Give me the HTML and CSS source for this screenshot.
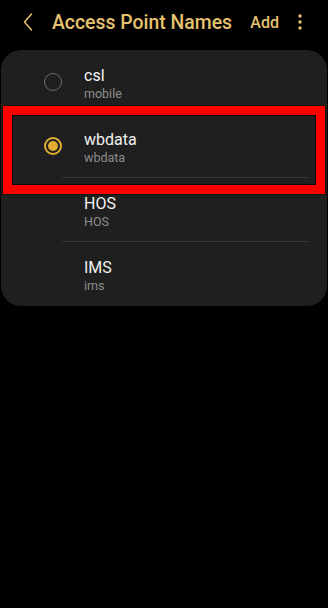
FILE: index.html
```html
<!DOCTYPE html>
<html lang="en">
<head>
    <meta charset="UTF-8">
    <meta name="viewport" content="width=device-width, initial-scale=1.0">
    <title>Access Point Names</title>
    <link rel="stylesheet" href="styles.css">
</head>
<body>

<div class="header">
    <div class="back">
        <svg width="10" height="18" viewBox="0 0 10 18">
            <polyline points="8.5,1 1.5,9 8.5,17" fill="none" stroke="#e6c26e" stroke-width="1.5" stroke-linecap="round" stroke-linejoin="round"/>
        </svg>
    </div>
    <h1 class="title">Access Point Names</h1>
    <div class="add">Add</div>
    <div class="more">
        <svg width="4" height="16" viewBox="0 0 4 16">
            <circle cx="2" cy="2" r="1.7" fill="#e6c26e"/>
            <circle cx="2" cy="8" r="1.7" fill="#e6c26e"/>
            <circle cx="2" cy="14" r="1.7" fill="#e6c26e"/>
        </svg>
    </div>
</div>

<div class="card">
    <div class="apn-row">
        <div class="radio"></div>
        <div class="apn-text">
            <div class="apn-name">csl</div>
            <div class="apn-sub">mobile</div>
        </div>
    </div>
    <div class="apn-row">
        <div class="radio checked"></div>
        <div class="apn-text">
            <div class="apn-name">wbdata</div>
            <div class="apn-sub">wbdata</div>
        </div>
    </div>
    <div class="apn-row">
        <div class="radio-space"></div>
        <div class="apn-text">
            <div class="apn-name">HOS</div>
            <div class="apn-sub">HOS</div>
        </div>
    </div>
    <div class="apn-row last">
        <div class="radio-space"></div>
        <div class="apn-text">
            <div class="apn-name">IMS</div>
            <div class="apn-sub">ims</div>
        </div>
    </div>

    <!-- highlight box drawn over the selected row -->
    <div class="highlight"></div>
</div>

</body>
</html>
```

FILE: styles.css
```css
body {
    font-family: Roboto, "Noto Sans", sans-serif;
    background-color: #000;
    margin: 0;
    padding: 0;
    width: 328px;
    height: 608px;
    overflow: hidden;
}

.header {
    display: flex;
    align-items: center;
    height: 44px;
    padding-left: 23px;
}

.back {
    display: flex;
    width: 10px;
}

.title {
    flex: 1;
    margin: 0 0 0 19px;
    font-size: 19.4px;
    font-weight: 500;
    color: #e6c26e;
}

.add {
    font-size: 16px;
    font-weight: 500;
    color: #e6c26e;
    margin-right: 19px;
}

.more {
    display: flex;
    margin-right: 26px;
}

.card {
    position: relative;
    margin: 6px 1px 0 1px;
    background-color: #1f1f1f;
    border-radius: 20px;
    overflow: hidden;
}

.apn-row {
    display: flex;
    align-items: center;
    height: 64px;
    position: relative;
}

.apn-row::after {
    content: "";
    position: absolute;
    left: 61px;
    right: 18px;
    bottom: 0;
    height: 1px;
    background-color: #353535;
}

.apn-row.last::after {
    display: none;
}

.radio,
.radio-space {
    width: 18px;
    height: 18px;
    margin-left: 43px;
    margin-right: 22px;
    box-sizing: border-box;
    flex-shrink: 0;
}

.radio {
    border: 1.5px solid #6e6e6e;
    border-radius: 50%;
}

.radio.checked {
    border: 2px solid #e2ad32;
    position: relative;
}

.radio.checked::after {
    content: "";
    position: absolute;
    left: 2px;
    top: 2px;
    width: 10px;
    height: 10px;
    border-radius: 50%;
    background-color: #e2ad32;
}

.apn-text {
    padding-top: 4px;
}

.apn-name {
    font-size: 16px;
    line-height: 20px;
    color: #f2f2f2;
}

.apn-sub {
    font-size: 12.5px;
    line-height: 16px;
    color: #8c8c8c;
}

.highlight {
    position: absolute;
    left: 2px;
    top: 56px;
    width: 322px;
    height: 88px;
    box-sizing: border-box;
    border: 9px solid #ff0000;
    box-shadow: inset 0 0 0 1px #0a0a0a, 0 0 0 1px #141414;
    pointer-events: none;
}
```
